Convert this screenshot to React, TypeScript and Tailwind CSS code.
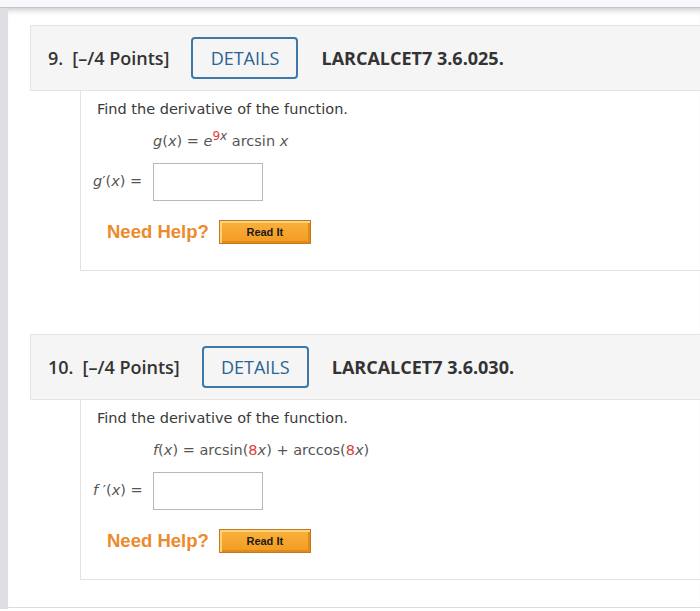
const verdana = { fontFamily: '"DejaVu Sans", Verdana, sans-serif' };

type Q = {
    num: string;
    code: string;
    formula: React.ReactNode;
    answerLabel: React.ReactNode;
};

function ReadIt() {
    return (
        <button className="h-[24px] w-[92px] border border-[#c27a22] bg-[linear-gradient(#f8b23e,#f39a20)] shadow-[inset_2px_2px_0_#fcd27a,inset_-2px_-2px_0_#e08a1a] font-['Liberation_Sans',Arial,sans-serif] text-[11px] font-bold text-[#1a1a1a]">
            Read It
        </button>
    );
}

function Question({ q, last }: { q: Q; last?: boolean }) {
    return (
        <section className={last ? "" : "mb-[63px]"}>
            <header className="flex h-[66px] items-center border border-r-0 border-[#e4e4e4] bg-[#f5f5f5] pl-[17px] font-['Open_Sans',sans-serif] text-[18px] font-semibold text-[#333]">
                <span>{q.num}</span>
                <span className="ml-[9px]">[–/4 Points]</span>
                <span className="ml-[22px] flex h-[42px] w-[107px] items-center justify-center rounded-[4px] border-2 border-[#3f78a6] font-medium text-[#2b6393]">
                    DETAILS
                </span>
                <span className="ml-[23px] font-bold">{q.code}</span>
            </header>
            <div
                className="ml-[50px] h-[180px] border-b border-l border-[#e2e2e2] pl-[16px] pt-[8px] text-[14.5px] text-[#3a3a3a]"
                style={verdana}
            >
                <p className="leading-[20px]">Find the derivative of the function.</p>
                <p className="ml-[56px] mt-[12px] leading-[20px] text-[#555]">{q.formula}</p>
                <div className="mt-[12px] flex items-center">
                    <span className="-ml-[4px] w-[60px] text-[#555]">{q.answerLabel}</span>
                    <div className="h-[38px] w-[110px] border border-[#b8b8b8] bg-white" />
                </div>
                <div className="ml-[10px] mt-[17px] flex items-center gap-[10px]">
                    <span className="font-['Liberation_Sans',Arial,sans-serif] text-[18.5px] font-bold text-[#ec8a2c]">
                        Need Help?
                    </span>
                    <ReadIt />
                </div>
            </div>
        </section>
    );
}

const red = "text-[#e03c3c]";

const questions: Q[] = [
    {
        num: "9.",
        code: "LARCALCET7 3.6.025.",
        formula: (
            <>
                <i>g</i>(<i>x</i>) = <i>e</i>
                <sup className={`${red} text-[12px]`}>
                    9<i className="text-[#555]">x</i>
                </sup>{" "}
                arcsin <i>x</i>
            </>
        ),
        answerLabel: (
            <>
                <i>g</i>′(<i>x</i>) =
            </>
        ),
    },
    {
        num: "10.",
        code: "LARCALCET7 3.6.030.",
        formula: (
            <>
                <i>f</i>(<i>x</i>) = arcsin(<span className={red}>8</span>
                <i>x</i>) + arccos(<span className={red}>8</span>
                <i>x</i>)
            </>
        ),
        answerLabel: (
            <>
                <i>f</i> ′(<i>x</i>) =
            </>
        ),
    },
];

export default function App() {
    return (
        <div className="h-[611px] w-[700px] overflow-hidden bg-white">
            <div className="h-[8px] border-b border-[#c4c4ca] bg-[#f7f8fb]" />
            <div className="flex h-[601px]">
                <div className="w-[8px] shrink-0 bg-[#dedee2]" />
                <div className="flex-1 shadow-[inset_0_7px_6px_-5px_rgba(0,0,0,0.22)]">
                    <div className="h-[600px] border-b border-[#dcdcdc] pl-[22px] pt-[17px]">
                        {questions.map((q, i) => (
                            <Question key={q.num} q={q} last={i === questions.length - 1} />
                        ))}
                    </div>
                </div>
            </div>
        </div>
    );
}
